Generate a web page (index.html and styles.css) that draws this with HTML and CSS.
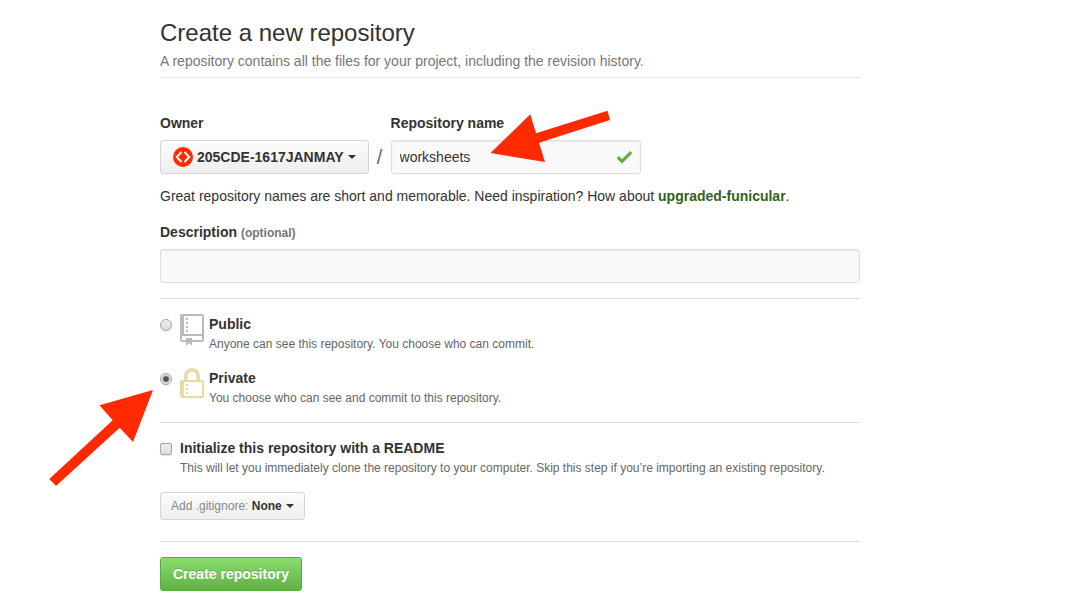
FILE: index.html
```html
<!DOCTYPE html>
<html lang="en">
<head>
<meta charset="utf-8">
<meta name="viewport" content="width=device-width, initial-scale=1">
<title>Create a new repository</title>
<link rel="stylesheet" href="styles.css">
</head>
<body>
<main class="page">
  <header class="page-head">
    <h1 class="page-title">Create a new repository</h1>
    <p class="page-lead">A repository contains all the files for your project, including the revision history.</p>
  </header>
  <form class="repo-form">
    <div class="name-row">
      <div class="field">
        <label class="label" for="owner">Owner</label>
        <button class="btn owner-btn" id="owner" type="button" aria-haspopup="true">
          <svg class="avatar" viewBox="0 0 20 20" aria-hidden="true">
            <circle cx="10" cy="10" r="10" fill="#ff2a00"/>
            <path d="M8.500 5L3.700 10l4.800 5M11.500 5l4.800 5-4.800 5" fill="none" stroke="#fff" stroke-width="1.900"/>
          </svg>
          <span>205CDE-1617JANMAY</span>
          <span class="caret"></span>
        </button>
      </div>
      <span class="slash">/</span>
      <div class="field name-field">
        <label class="label" for="name">Repository name</label>
        <div class="input-wrap">
          <input class="input" id="name" type="text" value="worksheets">
          <svg class="check" viewBox="0 0 12 16" aria-hidden="true"><path d="M12 5l-8 8-4-4 1.500-1.500L4 10l6.500-6.500z"/></svg>
        </div>
        <svg class="arrow arrow-name" viewBox="490 110 121 53" aria-hidden="true"><path d="M490.500 153L530.300 114.300L536 133.300L607.500 110.700L610 120L539 142.700L545 162z"/></svg>
      </div>
    </div>
    <p class="note">Great repository names are short and memorable. Need inspiration? How about <strong class="suggestion">upgraded-funicular</strong>.</p>
    <div class="field">
      <label class="label" for="description">Description <span class="optional">(optional)</span></label>
      <input class="input" id="description" type="text">
    </div>
    <hr class="rule">
    <div class="options">
      <div class="option">
        <input class="choice" id="public" type="radio" name="visibility">
        <svg class="option-icon" viewBox="0 0 12 16" aria-hidden="true"><path d="M4 9H3V8h1v1zm0-3H3v1h1V6zm0-2H3v1h1V4zm0-2H3v1h1V2zm8-1v12c0 .55-.45 1-1 1H6v2l-1.500-1.500L3 16v-2H1c-.55 0-1-.45-1-1V1c0-.55.45-1 1-1h10c.55 0 1 .45 1 1zm-1 10H1v2h2v-1h3v1h5v-2zm0-10H2v9h9V1z"/></svg>
        <div class="option-text">
          <label class="option-label" for="public">Public</label>
          <p class="hint">Anyone can see this repository. You choose who can commit.</p>
        </div>
      </div>
      <div class="option">
        <input class="choice" id="private" type="radio" name="visibility" checked>
        <svg class="option-icon lock" viewBox="0 0 12 16" aria-hidden="true"><path d="M4 13H3v-1h1v1zm8-6v7c0 .55-.45 1-1 1H1c-.55 0-1-.45-1-1V7c0-.55.45-1 1-1h1V4c0-2.200 1.800-4 4-4s4 1.800 4 4v2h1c.55 0 1 .45 1 1zM3.800 6h4.410V4c0-1.220-.98-2.200-2.200-2.200-1.220 0-2.200.98-2.200 2.200v2H3.800zM11 7H2v7h9V7zM4 8H3v1h1V8zm0 2H3v1h1v-1z"/></svg>
        <div class="option-text">
          <label class="option-label" for="private">Private</label>
          <p class="hint">You choose who can see and commit to this repository.</p>
        </div>
        <svg class="arrow arrow-private" viewBox="49 390 105 97" aria-hidden="true"><path d="M153 390L99.500 405.300L112.700 420.300L49.300 479L56 486L119.700 427.700L133 442z"/></svg>
      </div>
    </div>
    <hr class="rule">
    <div class="option">
      <input class="choice choice-box" id="readme" type="checkbox">
      <div class="option-text">
        <label class="option-label" for="readme">Initialize this repository with a README</label>
        <p class="hint">This will let you immediately clone the repository to your computer. Skip this step if you’re importing an existing repository.</p>
      </div>
    </div>
    <button class="btn ignore-btn" type="button" aria-haspopup="true"><span><span class="muted">Add .gitignore:</span> None</span><span class="caret"></span></button>
    <hr class="rule rule-last">
    <button class="btn btn-primary" type="submit">Create repository</button>
  </form>
</main>
</body>
</html>
```
FILE: styles.css
```css
* {
  box-sizing: border-box;
}

body {
  margin: 0;
  background: #fff;
  color: #333;
  font: 14px/21px "Liberation Sans", Arial, sans-serif;
}

.page {
  max-width: 860px;
  padding: 15px 0 20px 160px;
}

.page-head {
  margin-bottom: 35px;
  padding-bottom: 5px;
  border-bottom: 1px solid #e5e5e5;
}

.page-title {
  margin: 0;
  font-size: 24px;
  font-weight: 400;
  line-height: 36px;
}

.page-lead {
  margin: 0;
  color: #767676;
}

.name-row {
  display: flex;
  align-items: flex-end;
}

.field {
  display: flex;
  flex-direction: column;
  gap: 6px;
}

.name-field {
  position: relative;
  width: 250px;
}

.label,
.option-label {
  font-weight: 700;
}

.optional {
  color: #767676;
  font-size: 12px;
  line-height: 12px;
}

.slash {
  width: 22px;
  color: #666;
  font-size: 20px;
  line-height: 34px;
  text-align: center;
}

.btn {
  display: flex;
  align-items: center;
  gap: 4px;
  border: 1px solid #d5d5d5;
  border-radius: 3px;
  background: linear-gradient(#fcfcfc, #eee);
  color: #333;
  font: inherit;
  font-weight: 700;
  white-space: nowrap;
}

.owner-btn {
  height: 34px;
  padding: 0 12px;
}

.avatar {
  width: 20px;
  height: 20px;
}

.caret {
  border: 4px solid transparent;
  border-top-color: currentColor;
  border-bottom: 0;
}

.input-wrap {
  position: relative;
}

.input {
  display: block;
  width: 100%;
  height: 34px;
  padding: 0 8px;
  border: 1px solid #ddd;
  border-radius: 3px;
  background: #fafafa;
  box-shadow: inset 0 1px 2px rgba(0, 0, 0, 0.075);
  color: #333;
  font: inherit;
}

.check {
  position: absolute;
  top: 7px;
  right: 9px;
  width: 15px;
  height: 20px;
  fill: #5aad35;
  stroke: #5aad35;
  stroke-width: 0.5;
}

.arrow {
  position: absolute;
  fill: #ff2a00;
  pointer-events: none;
}

.arrow-name {
  top: -3px;
  left: 99px;
  width: 121px;
  height: 53px;
}

.arrow-private {
  top: 22px;
  left: -111px;
  width: 105px;
  height: 97px;
}

.note {
  margin: 12px 0 15px;
}

.suggestion {
  color: #306318;
}

.rule {
  height: 1px;
  margin: 15px 0;
  border: 0;
  background: #ddd;
}

.rule-last {
  margin-top: 21px;
}

.options {
  display: flex;
  flex-direction: column;
  gap: 15px;
}

.option {
  position: relative;
  display: flex;
  align-items: flex-start;
}

.choice {
  appearance: none;
  flex: none;
  width: 12px;
  height: 12px;
  margin: 5px 8px 0 0;
  border: 1px solid #a5a5a5;
  border-radius: 50%;
  background: linear-gradient(#ededed, #dcdcdc);
  box-shadow: 0 1px 1px rgba(0, 0, 0, 0.1);
}

.choice:checked {
  background: radial-gradient(circle, #505050 0 2px, #e4e4e4 4px);
}

.choice-box {
  border-radius: 2px;
}

.option-icon {
  flex: none;
  width: 24px;
  height: 32px;
  margin-right: 5px;
  fill: #bbb;
}

.lock {
  fill: #e9dba5;
}

.option-label {
  display: block;
  line-height: 20px;
}

.hint {
  margin: 1px 0 0;
  color: #666;
  font-size: 12px;
  line-height: 18px;
}

.ignore-btn {
  height: 28px;
  margin-top: 15px;
  padding: 0 10px;
  font-size: 12px;
}

.muted {
  color: #888;
  font-weight: 400;
}

.btn-primary {
  height: 34px;
  padding: 0 12px;
  border-color: #5ca941;
  background: linear-gradient(#8add6d, #60b044);
  color: #fff;
  text-shadow: 0 -1px 0 rgba(0, 0, 0, 0.15);
}
```
